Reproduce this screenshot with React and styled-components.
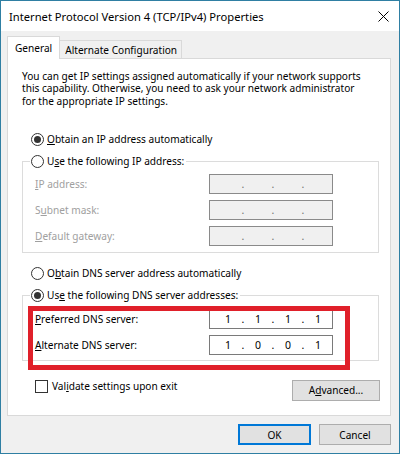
import React from "react";
import styled, { createGlobalStyle } from "styled-components";

const GlobalStyle = createGlobalStyle`
  html, body { margin: 0; padding: 0; background: #ffffff; }
  body { font-family: "Noto Sans", "Open Sans", sans-serif; font-size: 10.1px; color: #000; }
  * { box-sizing: border-box; }
`;

const FONT = `"Noto Sans", "Open Sans", sans-serif`;

const Window = styled.div`
  width: 400px;
  height: 454px;
  border: 1px solid #2f7fa3;
  background: #f0f0f0;
  display: flex;
  flex-direction: column;
  font-family: ${FONT};
  font-size: 10.1px;
`;

const TitleBar = styled.div`
  height: 30px;
  background: #ffffff;
  display: flex;
  align-items: center;
  justify-content: space-between;
  padding: 0 10px 0 8px;
  font-size: 11.2px;
  flex: none;
`;

const Body = styled.div`
  flex: 1;
  display: flex;
  flex-direction: column;
  padding: 6px 8px 0 6px;
`;

const TabRow = styled.div`
  display: flex;
  align-items: flex-end;
  height: 22px;
  position: relative;
  z-index: 1;
  margin-bottom: -1px;
`;

const Tab = styled.div`
  height: ${(p) => (p.$active ? "23px" : "19px")};
  padding: ${(p) => (p.$active ? "0 7px 0 7px" : "1px 4px 0 5px")};
  border: 1px solid #d9d9d9;
  border-bottom: ${(p) => (p.$active ? "none" : "1px solid #d9d9d9")};
  border-left: ${(p) => (p.$active ? "1px solid #d9d9d9" : "none")};
  background: ${(p) => (p.$active ? "#ffffff" : "#f0f0f0")};
  display: flex;
  align-items: center;
`;

const Panel = styled.div`
  height: 358px;
  background: #ffffff;
  border: 1px solid #d9d9d9;
  padding: 11px 10px 0 14px;
  display: flex;
  flex-direction: column;
`;

const Description = styled.p`
  margin: 0;
  max-width: 345px;
  line-height: 12.3px;
`;

const RadioRow = styled.label`
  display: flex;
  align-items: center;
  height: 15px;
  gap: 3px;
  padding-left: ${(p) => (p.$inset ? "0" : "9px")};
  margin-top: ${(p) => p.$mt || 0}px;
`;

const RadioCircle = styled.span`
  width: 13px;
  height: 13px;
  border-radius: 50%;
  border: 1px solid #333333;
  background: #fff;
  display: flex;
  align-items: center;
  justify-content: center;
  flex: none;
  &::after {
    content: "";
    width: 7px;
    height: 7px;
    border-radius: 50%;
    background: ${(p) => (p.$checked ? "#333333" : "transparent")};
  }
`;

const Key = styled.span`
  text-decoration: underline;
  text-underline-offset: 1px;
`;

const Group = styled.fieldset`
  margin: ${(p) => p.$mt || 0}px 0 0 0;
  padding: ${(p) => p.$pt}px 0 ${(p) => p.$pb}px 0;
  border: 1px solid #dcdcdc;
  min-inline-size: 0;
  position: relative;
  display: flex;
  flex-direction: column;
  gap: 6px;
  width: 357px;
`;

const Legend = styled.legend`
  padding: 0 2px 0 1px;
  margin-left: 7px;
`;

const FieldRow = styled.div`
  display: flex;
  align-items: center;
  height: 20px;
  padding-left: 12px;
  color: ${(p) => (p.$disabled ? "#a0a0a0" : "#000")};
`;

const FieldLabel = styled.span`
  width: 174px;
  flex: none;
`;

const IpBox = styled.div`
  width: 124px;
  height: 20px;
  border: 1px solid ${(p) => (p.$disabled ? "#8a8a8a" : "#7a7a7a")};
  background: ${(p) => (p.$disabled ? "#f0f0f0" : "#ffffff")};
  display: flex;
  align-items: center;
  padding-left: 5px;
  color: ${(p) => (p.$disabled ? "#707070" : "#000")};
  font-size: 10.5px;
`;

const Octet = styled.span`
  width: 26px;
  text-align: center;
`;

const Dot = styled.span`
  width: 4px;
  text-align: center;
`;

const RedMark = styled.div`
  position: absolute;
  left: 5px;
  top: 3px;
  width: 322px;
  height: 64px;
  border: 5px solid #e0202a;
  pointer-events: none;
`;

const BottomRow = styled.div`
  display: flex;
  justify-content: space-between;
  align-items: flex-start;
  margin-top: 19px;
  padding-left: 13px;
`;

const CheckRow = styled.label`
  display: flex;
  align-items: center;
  gap: 4px;
  height: 13px;
`;

const CheckBox = styled.span`
  width: 13px;
  height: 13px;
  border: 1px solid #333333;
  background: #fff;
  flex: none;
`;

const Button = styled.button`
  font-family: ${FONT};
  font-size: 10.1px;
  color: #000;
  width: ${(p) => p.$w}px;
  height: 21px;
  background: #e1e1e1;
  border: ${(p) => (p.$default ? "2px solid #0078d7" : "1px solid #adadad")};
  padding: 0;
  margin: 0;
`;

const Footer = styled.div`
  display: flex;
  justify-content: flex-end;
  gap: 8px;
  margin-top: 8px;
`;

function IpField({ values, disabled }) {
  const v = values || ["", "", "", ""];
  return (
    <IpBox $disabled={disabled}>
      <Octet>{v[0]}</Octet>
      <Dot>.</Dot>
      <Octet>{v[1]}</Octet>
      <Dot>.</Dot>
      <Octet>{v[2]}</Octet>
      <Dot>.</Dot>
      <Octet>{v[3]}</Octet>
    </IpBox>
  );
}

function CloseIcon() {
  return (
    <svg width="11" height="11" viewBox="0 0 11 11">
      <path d="M0.5 0.5 L10.5 10.5 M10.5 0.5 L0.5 10.5" stroke="#000" strokeWidth="1" />
    </svg>
  );
}

export default function App() {
  return (
    <>
      <GlobalStyle />
      <Window>
        <TitleBar>
          <span>Internet Protocol Version 4 (TCP/IPv4) Properties</span>
          <CloseIcon />
        </TitleBar>
        <Body>
          <TabRow>
            <Tab $active>General</Tab>
            <Tab>Alternate Configuration</Tab>
          </TabRow>
          <Panel>
            <Description>
              You can get IP settings assigned automatically if your network supports
              this capability. Otherwise, you need to ask your network administrator
              for the appropriate IP settings.
            </Description>
            <RadioRow $mt={25}>
              <RadioCircle $checked />
              <span><Key>O</Key>btain an IP address automatically</span>
            </RadioRow>
            <Group $mt={7} $pt={5} $pb={6}>
              <Legend>
                <RadioRow $inset>
                  <RadioCircle />
                  <span>U<Key>s</Key>e the following IP address:</span>
                </RadioRow>
              </Legend>
              <FieldRow $disabled>
                <FieldLabel><Key>I</Key>P address:</FieldLabel>
                <IpField disabled />
              </FieldRow>
              <FieldRow $disabled>
                <FieldLabel>S<Key>u</Key>bnet mask:</FieldLabel>
                <IpField disabled />
              </FieldRow>
              <FieldRow $disabled>
                <FieldLabel><Key>D</Key>efault gateway:</FieldLabel>
                <IpField disabled />
              </FieldRow>
            </Group>
            <RadioRow $mt={13}>
              <RadioCircle />
              <span>O<Key>b</Key>tain DNS server address automatically</span>
            </RadioRow>
            <Group $mt={7} $pt={6} $pb={5}>
              <Legend>
                <RadioRow $inset>
                  <RadioCircle $checked />
                  <span>Us<Key>e</Key> the following DNS server addresses:</span>
                </RadioRow>
              </Legend>
              <FieldRow>
                <FieldLabel><Key>P</Key>referred DNS server:</FieldLabel>
                <IpField values={["1", "1", "1", "1"]} />
              </FieldRow>
              <FieldRow>
                <FieldLabel><Key>A</Key>lternate DNS server:</FieldLabel>
                <IpField values={["1", "0", "0", "1"]} />
              </FieldRow>
              <RedMark />
            </Group>
            <BottomRow>
              <CheckRow>
                <CheckBox />
                <span>Val<Key>i</Key>date settings upon exit</span>
              </CheckRow>
              <Button $w={88}>A<Key>d</Key>vanced...</Button>
            </BottomRow>
          </Panel>
          <Footer>
            <Button $w={73} $default>OK</Button>
            <Button $w={72}>Cancel</Button>
          </Footer>
        </Body>
      </Window>
    </>
  );
}
